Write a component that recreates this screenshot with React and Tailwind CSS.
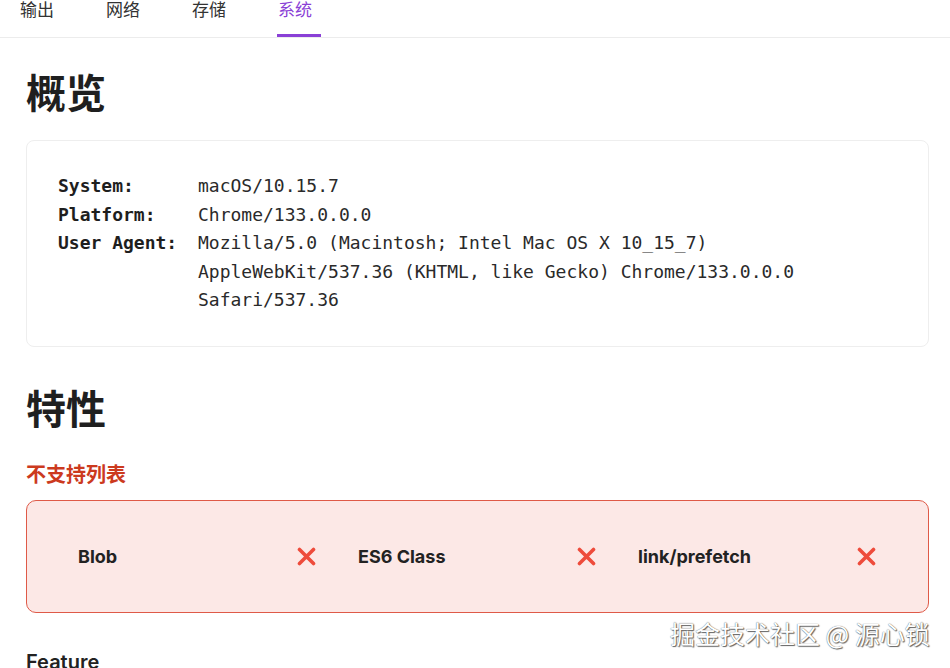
import React from "react";

const tabs = ["输出", "网络", "存储", "系统"];

const sysInfo = [
  { label: "System:", value: "macOS/10.15.7" },
  { label: "Platform:", value: "Chrome/133.0.0.0" },
  {
    label: "User Agent:",
    value:
      "Mozilla/5.0 (Macintosh; Intel Mac OS X 10_15_7) AppleWebKit/537.36 (KHTML, like Gecko) Chrome/133.0.0.0 Safari/537.36",
  },
];

const unsupported = ["Blob", "ES6 Class", "link/prefetch"];

function Cross() {
  return (
    <svg width="19" height="19" viewBox="0 0 19 19">
      <path
        d="M2.5 2.5 L16.5 16.5 M16.5 2.5 L2.5 16.5"
        stroke="#ee4b3b"
        strokeWidth="3.6"
        strokeLinecap="round"
      />
    </svg>
  );
}

export default function App() {
  const active = "系统";

  return (
    <div className="relative min-h-screen bg-white font-['Inter','Noto_Sans_CJK_SC',sans-serif] text-[#222] overflow-hidden">
      {/* tab bar */}
      <div className="h-[38px] border-b border-[#ececec] flex items-end gap-[52px] pl-[20px]">
        {tabs.map((t) => (
          <div
            key={t}
            className={`relative h-full flex items-end pb-[16px] text-[17px] leading-[24px] font-['Noto_Sans_CJK_SC',sans-serif] ${
              t === active ? "text-[#8a40d6]" : "text-[#333]"
            }`}
          >
            {t}
            {t === active && (
              <span className="absolute left-[-1px] bottom-[0px] w-[44px] h-[3px] bg-[#8a40d6]" />
            )}
          </div>
        ))}
      </div>

      <div className="pl-[26px] pr-[21px]">
        <h1 className="mt-[29px] text-[40px] leading-[48px] font-bold font-['Noto_Sans_CJK_SC',sans-serif] text-[#1f1f1f]">
          概览
        </h1>

        {/* system info card */}
        <div className="mt-[25px] border border-[#eeeeee] rounded-[8px] px-[31px] py-[31px] font-['DejaVu_Sans_Mono',monospace] text-[18px] leading-[28.6px] text-[#2a2a2a]">
          {sysInfo.map((row) => (
            <div key={row.label} className="flex">
              <div className="w-[140px] shrink-0 font-bold text-[#1e1e1e]">{row.label}</div>
              <div className="flex-1 pr-[4px]">{row.value}</div>
            </div>
          ))}
        </div>

        <h1 className="mt-[36px] text-[40px] leading-[48px] font-bold font-['Noto_Sans_CJK_SC',sans-serif] text-[#1f1f1f]">
          特性
        </h1>

        <h3 className="mt-[29px] text-[20px] leading-[28px] font-bold font-['Noto_Sans_CJK_SC',sans-serif] text-[#cc3a1e]">
          不支持列表
        </h3>

        {/* unsupported features */}
        <div className="mt-[12px] h-[113px] rounded-[10px] border-[1.5px] border-[#df5a48] bg-[#fce8e6] px-[26px] grid grid-cols-[280px_280px_280px] items-center">
          {unsupported.map((f) => (
            <div key={f} className="flex items-center justify-between pl-[25px] pr-[17px]">
              <span className="text-[18px] font-bold text-[#222]">{f}</span>
              <Cross />
            </div>
          ))}
        </div>

        <h3 className="mt-[35px] text-[20px] leading-[28px] font-semibold text-[#222]">Feature</h3>
      </div>

      {/* watermark */}
      <div className="absolute left-[670px] top-[618px] text-[25px] leading-[30px] font-['Noto_Sans_CJK_SC',sans-serif] text-white [text-shadow:0_0_1px_#444,1px_1px_1px_#666] whitespace-nowrap">
        掘金技术社区 @ 源心锁
      </div>
    </div>
  );
}
